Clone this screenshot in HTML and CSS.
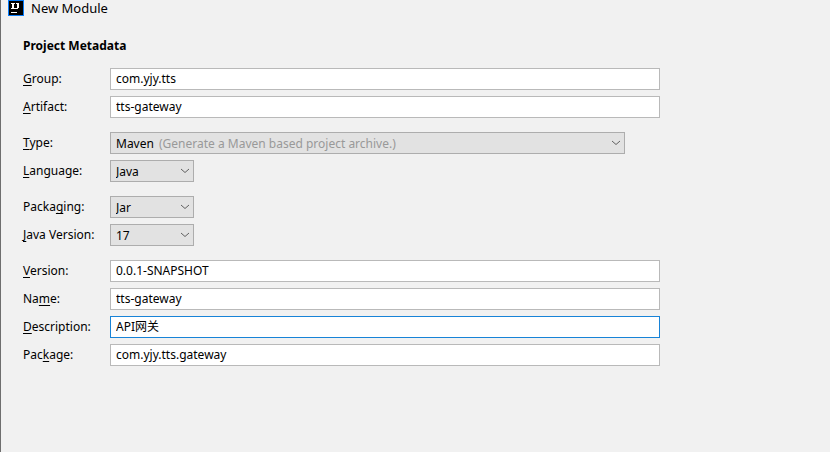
FILE: index.html
```html
<!DOCTYPE html>
<html lang="en">
<head>
<meta charset="utf-8">
<title>New Module</title>
<link rel="stylesheet" href="styles.css">
</head>
<body>
<main class="dialog">
  <header class="titlebar">
    <svg class="logo" viewBox="0 0 16 16" aria-hidden="true">
      <path fill="#087cfa" d="M0 0h16v16H0z"/>
      <path fill="#000" d="M1 1h14v14H1z"/>
      <path fill="#fff" d="M3 3h4v1H6v4h1v1H3V8h1V4H3zM8 3h3v5h-1v1H7V8h2V4H8zM3 12h6v1H3z"/>
    </svg>
    <span class="title">New Module</span>
  </header>
  <form class="form">
    <h1 class="heading">Project Metadata</h1>
    <div class="group">
      <label class="label" for="group"><u>G</u>roup:</label>
      <input class="field" id="group" type="text" value="com.yjy.tts">
      <label class="label" for="artifact"><u>A</u>rtifact:</label>
      <input class="field" id="artifact" type="text" value="tts-gateway">
    </div>
    <div class="group">
      <label class="label" for="type"><u>T</u>ype:</label>
      <div class="combo combo-wide">
        <select class="field select" id="type"><option>Maven</option></select>
        <span class="hint">(Generate a Maven based project archive.)</span>
        <svg class="chevron" viewBox="0 0 10 6" aria-hidden="true"><path d="M1 1l4 3.5L9 1"/></svg>
      </div>
      <label class="label" for="language"><u>L</u>anguage:</label>
      <div class="combo">
        <select class="field select" id="language"><option>Java</option></select>
        <svg class="chevron" viewBox="0 0 10 6" aria-hidden="true"><path d="M1 1l4 3.5L9 1"/></svg>
      </div>
    </div>
    <div class="group">
      <label class="label" for="packaging">Packa<u>g</u>ing:</label>
      <div class="combo">
        <select class="field select" id="packaging"><option>Jar</option></select>
        <svg class="chevron" viewBox="0 0 10 6" aria-hidden="true"><path d="M1 1l4 3.5L9 1"/></svg>
      </div>
      <label class="label" for="java"><u>J</u>ava Version:</label>
      <div class="combo">
        <select class="field select" id="java"><option>17</option></select>
        <svg class="chevron" viewBox="0 0 10 6" aria-hidden="true"><path d="M1 1l4 3.5L9 1"/></svg>
      </div>
    </div>
    <div class="group">
      <label class="label" for="version"><u>V</u>ersion:</label>
      <input class="field" id="version" type="text" value="0.0.1-SNAPSHOT">
      <label class="label" for="name">Na<u>m</u>e:</label>
      <input class="field" id="name" type="text" value="tts-gateway">
      <label class="label" for="description"><u>D</u>escription:</label>
      <input class="field active" id="description" type="text" value="API网关">
      <label class="label" for="package">Pac<u>k</u>age:</label>
      <input class="field" id="package" type="text" value="com.yjy.tts.gateway">
    </div>
  </form>
</main>
</body>
</html>
```
FILE: styles.css
```css
* {
  box-sizing: border-box;
}

body {
  margin: 0;
  background: #f1f1f1;
  color: #000;
  font: 12px/20px "Noto Sans", "Noto Sans CJK SC", sans-serif;
}

.dialog {
  min-height: 100vh;
  border-left: 1px solid #6e6e6e;
}

.titlebar {
  display: flex;
  gap: 7px;
  padding-left: 7px;
}

.logo {
  width: 16px;
  height: 16px;
  shape-rendering: crispEdges;
}

.title {
  font-size: 13px;
  line-height: 16px;
}

.form {
  display: flex;
  flex-direction: column;
  gap: 12px;
  max-width: 659px;
  padding: 20px 0 18px 22px;
}

.heading {
  margin: 0;
  font-size: 12px;
  line-height: 20px;
  font-weight: 700;
}

.group {
  display: grid;
  grid-template-columns: 87px minmax(0, 1fr);
  gap: 6px 0;
}

.group + .group {
  margin-top: 2px;
}

.label {
  line-height: 22px;
  white-space: nowrap;
}

.label u {
  text-decoration-skip-ink: none;
  text-decoration-thickness: 1px;
  text-underline-offset: 2px;
}

.field {
  width: 100%;
  height: 22px;
  margin: 0;
  padding: 0 5px 2px;
  border: 1px solid #b9b9b9;
  border-radius: 0;
  outline: 0;
  background: #fff;
  color: #000;
  font: inherit;
}

.active,
.field:focus {
  border-color: #1883d7;
}

.combo {
  position: relative;
  width: 84px;
}

.combo-wide {
  width: auto;
  max-width: 515px;
}

.select {
  display: block;
  padding: 1px 20px 0 5px;
  border-color: #adadad;
  background: #e2e2e2;
  appearance: none;
}

.hint {
  position: absolute;
  top: 1px;
  left: 49px;
  line-height: 22px;
  color: #999;
  white-space: nowrap;
  pointer-events: none;
}

.chevron {
  position: absolute;
  top: 8px;
  right: 4px;
  width: 10px;
  height: 6px;
  fill: none;
  stroke: #606060;
  pointer-events: none;
}
```
